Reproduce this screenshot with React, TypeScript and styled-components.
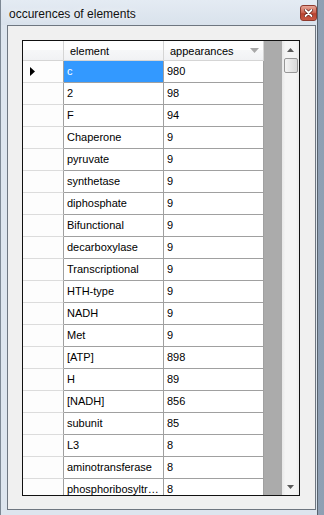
import React from 'react';
import styled, { createGlobalStyle } from 'styled-components';

// ----------------------------------------------------------------------------
// Data
// ----------------------------------------------------------------------------

const ROWS: Array<[string, number]> = [
  ['c', 980],
  ['2', 98],
  ['F', 94],
  ['Chaperone', 9],
  ['pyruvate', 9],
  ['synthetase', 9],
  ['diphosphate', 9],
  ['Bifunctional', 9],
  ['decarboxylase', 9],
  ['Transcriptional', 9],
  ['HTH-type', 9],
  ['NADH', 9],
  ['Met', 9],
  ['[ATP]', 898],
  ['H', 89],
  ['[NADH]', 856],
  ['subunit', 85],
  ['L3', 8],
  ['aminotransferase', 8],
  ['phosphoribosyltransferase', 8],
];

const GRID_LINE = '#a0a0a0';

// ----------------------------------------------------------------------------
// Styled Components
// ----------------------------------------------------------------------------

const GlobalStyle = createGlobalStyle`
  html, body {
    margin: 0;
    padding: 0;
  }
  body {
    width: 324px;
    height: 515px;
    overflow: hidden;
    background: linear-gradient(to right, #c4ced9, #8e9fb3);
    font-family: "Liberation Sans", Arial, sans-serif;
  }
`;

const Window = styled.div`
  width: 318px;
  height: 515px;
  box-sizing: border-box;
  border-left: 1px solid #7d8894;
  border-right: 1px solid #59636e;
  background: #dde5ee;
  display: flex;
  flex-direction: column;
`;

const TitleBar = styled.div`
  height: 25px;
  flex: none;
  display: flex;
  align-items: flex-start;
  justify-content: space-between;
  padding-left: 8px;
  background: linear-gradient(to bottom, #e4ebf3, #d9e2ec);
`;

const Title = styled.div`
  margin-top: 6px;
  font-size: 12px;
  line-height: 16px;
  color: #111;
  text-shadow: 0 0 6px rgba(255, 255, 255, 0.95);
`;

const CloseButton = styled.div`
  width: 17px;
  height: 16px;
  margin-top: 5px;
  box-sizing: border-box;
  border: 1px solid #8e3a2e;
  border-radius: 3px;
  background: linear-gradient(to bottom, #e6a597, #cf6a57 45%, #b94430 55%, #c95a45);
  display: flex;
  align-items: center;
  justify-content: center;
`;

const Client = styled.div`
  flex: none;
  margin: 0 1px 0 6px;
  border: 1px solid #6e7680;
  background: #f0f0f0;
  padding: 14px 15px 13px 14px;
`;

const Grid = styled.div`
  height: 456px;
  box-sizing: border-box;
  border: 1px solid #111;
  display: flex;
  background: #ababab;
`;

const TableArea = styled.div`
  flex: 1;
  overflow: hidden;
  font-size: 11px;
  color: #000;
`;

const HeaderRow = styled.div`
  display: flex;
  height: 20px;
`;

const HeaderCell = styled.div<{ $width: number }>`
  width: ${(p) => p.$width}px;
  flex: none;
  box-sizing: border-box;
  display: flex;
  align-items: center;
  justify-content: space-between;
  padding: 0 4px 0 6px;
  border-right: 1px solid #d5d5d5;
  border-bottom: 1px solid #d5d5d5;
  background: linear-gradient(to bottom, #ffffff 0%, #ffffff 45%, #f6f7f8 50%, #f1f2f4 100%);
  white-space: nowrap;
`;

const Row = styled.div`
  display: flex;
  height: 22px;
`;

const RowHeader = styled.div`
  width: 41px;
  flex: none;
  box-sizing: border-box;
  border-right: 1px solid ${GRID_LINE};
  border-bottom: 1px solid #dcdcdc;
  background: #fdfdfd;
  display: flex;
  align-items: center;
  padding-left: 7px;
`;

const Cell = styled.div<{ $selected?: boolean }>`
  width: 100px;
  flex: none;
  box-sizing: border-box;
  border-right: 1px solid ${GRID_LINE};
  border-bottom: 1px solid ${GRID_LINE};
  padding: 0 3px;
  line-height: 21px;
  white-space: nowrap;
  overflow: hidden;
  text-overflow: ellipsis;
  background: ${(p) => (p.$selected ? '#3399ff' : '#ffffff')};
  color: ${(p) => (p.$selected ? '#ffffff' : '#000000')};
`;

const ScrollBar = styled.div`
  width: 17px;
  flex: none;
  display: flex;
  flex-direction: column;
  background: linear-gradient(to right, #e8e8e8, #f4f4f4 20%, #f4f4f4 80%, #ebebeb);
`;

const ScrollButton = styled.div`
  height: 17px;
  flex: none;
  display: flex;
  align-items: center;
  justify-content: center;
`;

const Thumb = styled.div`
  height: 15px;
  margin: 0 1px 0 2px;
  box-sizing: border-box;
  border: 1px solid #979797;
  border-radius: 2px;
  background: linear-gradient(to right, #f4f4f4, #e6e6e6 50%, #d9d9d9);
`;

const Track = styled.div`
  flex: 1;
`;

// ----------------------------------------------------------------------------
// Glyphs
// ----------------------------------------------------------------------------

const CloseGlyph = () => (
  <svg width="9" height="8" viewBox="0 0 9 8">
    <path d="M1.5 1 L7.5 7 M7.5 1 L1.5 7" stroke="#5a1a12" strokeWidth="3.2" strokeLinecap="round" />
    <path d="M1.5 1 L7.5 7 M7.5 1 L1.5 7" stroke="#ffffff" strokeWidth="1.8" strokeLinecap="round" />
  </svg>
);

const SortGlyph = () => (
  <svg width="9" height="5" viewBox="0 0 9 5">
    <path d="M0 0 H9 L4.5 5 Z" fill="#a8a8a8" />
  </svg>
);

const RowPointer = () => (
  <svg width="5" height="9" viewBox="0 0 5 9">
    <path d="M0 0 L5 4.5 L0 9 Z" fill="#000" />
  </svg>
);

const Arrow: React.FC<{ up?: boolean }> = ({ up }) => (
  <svg width="7" height="4" viewBox="0 0 7 4">
    <path d={up ? 'M0 4 L3.5 0 L7 4 Z' : 'M0 0 H7 L3.5 4 Z'} fill="#5a5a5a" />
  </svg>
);

// ----------------------------------------------------------------------------
// App
// ----------------------------------------------------------------------------

export default function App() {
  return (
    <>
      <GlobalStyle />
      <Window>
        <TitleBar>
          <Title>occurences of elements</Title>
          <CloseButton>
            <CloseGlyph />
          </CloseButton>
        </TitleBar>

        <Client>
          <Grid>
            <TableArea>
              <HeaderRow>
                <HeaderCell $width={41} />
                <HeaderCell $width={100}>element</HeaderCell>
                <HeaderCell $width={100}>
                  appearances
                  <SortGlyph />
                </HeaderCell>
              </HeaderRow>

              {ROWS.map(([name, count], i) => (
                <Row key={name}>
                  <RowHeader>{i === 0 && <RowPointer />}</RowHeader>
                  <Cell $selected={i === 0}>{name}</Cell>
                  <Cell>{count}</Cell>
                </Row>
              ))}
            </TableArea>

            <ScrollBar>
              <ScrollButton>
                <Arrow up />
              </ScrollButton>
              <Thumb />
              <Track />
              <ScrollButton>
                <Arrow />
              </ScrollButton>
            </ScrollBar>
          </Grid>
        </Client>
      </Window>
    </>
  );
}
